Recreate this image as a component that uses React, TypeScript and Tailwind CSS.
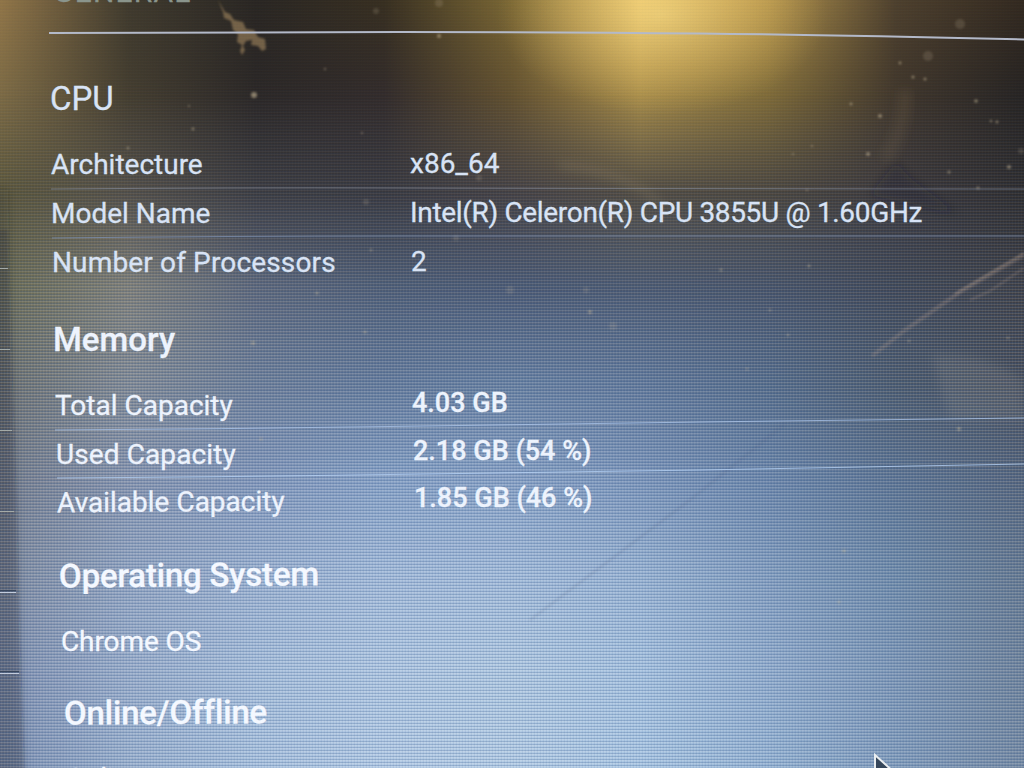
import type { ReactNode } from 'react';

// Glow behind the panel: one list per 96px band, one stop every 128px
const glow = [
  ['#927648', '#403a2d', '#2a2622', '#382f20', '#7c6834', '#eac872', '#b4944c', '#4e402d', '#33291f'],
  ['#7c6a44', '#443d2f', '#2b2726', '#322b2a', '#62502f', '#a58a48', '#7e6a38', '#40362b', '#262322'],
  ['#5a5438', '#524d45', '#3b3a3e', '#38373c', '#443f40', '#514a3f', '#4a443b', '#3a3638', '#2d2b2c'],
  ['#68684f', '#7f7e76', '#5c6577', '#4f5c72', '#4b5870', '#4c586d', '#475164', '#3f4552', '#3d3d42'],
  ['#6c6e6a', '#828992', '#6d7d96', '#657a99', '#687f9f', '#627898', '#566b87', '#4b5869', '#454a55'],
  ['#757b87', '#8794ad', '#8498ba', '#88a2c6', '#89a2c5', '#7d96ba', '#6c86a9', '#5d7390', '#556378'],
  ['#808a9d', '#93a5c1', '#9db2d0', '#a5bcda', '#a4bcda', '#9ab4d3', '#849ebf', '#708ba9', '#66788e'],
  ['#8190ae', '#9aadca', '#a8bfdb', '#b1c8e2', '#b2cae2', '#a8c3e0', '#93adcd', '#7e97b6', '#70839a'],
  ['#7f90b0', '#9bb1ce', '#aac2de', '#b4cbe5', '#b5cde5', '#abc7e3', '#97b4d3', '#829cbb', '#7589a2'],
];

const specks = [
  [254, 95, 3], [193, 129, 1.4], [128, 148, 1.3], [189, 106, 0.9], [325, 69, 1], [362, 133, 1],
  [439, 3, 4], [376, 11, 3], [439, 36, 2], [479, 178, 3], [366, 202, 3], [456, 238, 3], [371, 250, 1.2],
  [851, 104, 1.4], [960, 24, 5], [928, 56, 5], [900, 63, 1.4], [913, 77, 1.5], [925, 79, 1.5],
  [880, 116, 2], [991, 121, 1.2], [997, 122, 1.4], [976, 101, 1.8], [1021, 151, 3], [1009, 167, 2],
  [949, 172, 1.5], [868, 154, 2], [793, 154, 1], [812, 146, 1], [807, 190, 1], [978, 188, 1.4],
  [317, 293, 1.5], [253, 343, 2], [510, 290, 4], [586, 290, 3], [590, 312, 2], [613, 326, 4],
  [365, 332, 1.6], [721, 270, 1.4], [809, 266, 1.4], [770, 310, 1.2],
  [788, 335, 1.2], [909, 341, 1.2], [1008, 338, 1.2], [747, 369, 1.2], [959, 429, 2],
  [261, 439, 1.5], [844, 551, 1.8], [839, 602, 1.4],
];

const ticks = [268, 350, 431, 512, 592, 673];
const tickWidths = ['w-2', 'w-[10px]', 'w-[12px]', 'w-[14px]', 'w-4', 'w-[19px]'];

function Backdrop() {
  return (
    <svg className="absolute inset-0 h-full w-full" viewBox="0 0 1024 768">
      <defs>
        {glow.map((row, i) => (
          <linearGradient key={i} id={`row${i}`} gradientUnits="userSpaceOnUse" x1="0" x2="1024" y1="0" y2="0">
            {row.map((c, j) => (
              <stop key={j} offset={j / 8} stopColor={c} />
            ))}
          </linearGradient>
        ))}
        <linearGradient id="fadeDown" x1="0" x2="0" y1="0" y2="1">
          <stop offset="0" stopColor="#fff" stopOpacity="0" />
          <stop offset="1" stopColor="#fff" />
        </linearGradient>
        <linearGradient id="gridFade" x1="0" x2="0" y1="0" y2="1">
          <stop offset="0.1" stopColor="#fff" stopOpacity="0.1" />
          <stop offset="0.45" stopColor="#fff" />
        </linearGradient>
        {glow.slice(1).map((_, i) => (
          <mask key={i} id={`band${i}`} className="[mask-type:alpha]" maskUnits="userSpaceOnUse" x="0" y={i * 96} width="1024" height="96">
            <rect y={i * 96} width="1024" height="96" fill="url(#fadeDown)" />
          </mask>
        ))}
        <mask id="gridMask">
          <rect width="1024" height="768" fill="url(#gridFade)" />
        </mask>
        <pattern id="pixels" width="3" height="3" patternUnits="userSpaceOnUse">
          <rect width="3" height="1" fill="#2c5488" fillOpacity="0.24" />
          <rect y="1" width="3" height="1" fill="#fff" fillOpacity="0.13" />
          <rect width="1" height="3" fill="#2a4a7a" fillOpacity="0.07" />
          <rect x="1" width="1" height="3" fill="#fff" fillOpacity="0.05" />
        </pattern>
        <radialGradient id="lamp">
          <stop offset="0" stopColor="#ffe084" stopOpacity="0.5" />
          <stop offset="0.5" stopColor="#f0c868" stopOpacity="0.3" />
          <stop offset="1" stopColor="#e8bf5c" stopOpacity="0" />
        </radialGradient>
        <filter id="soft" x="-50%" y="-50%" width="200%" height="200%">
          <feGaussianBlur stdDeviation="5" />
        </filter>
        <filter id="fine" x="-20%" y="-20%" width="140%" height="140%">
          <feGaussianBlur stdDeviation="0.8" />
        </filter>
      </defs>

      {glow.slice(1).map((_, i) => (
        <g key={i}>
          <rect y={i * 96} width="1024" height="96" fill={`url(#row${i})`} />
          <rect y={i * 96} width="1024" height="96" fill={`url(#row${i + 1})`} mask={`url(#band${i})`} />
        </g>
      ))}
      <ellipse cx="662" cy="15" rx="165" ry="100" fill="url(#lamp)" />

      {/* side menu edge */}
      <path d="M-10 230H8L13 400L17 520L20 640L25 790H-10Z" fill="#20262c" fillOpacity="0.24" filter="url(#fine)" />
      <path d="M-10 190H8L13 400L17 520L20 640L25 790H-10Z" fill="#20262c" fillOpacity="0.2" filter="url(#soft)" />

      {/* smudges and scratches */}
      <path
        d="M218 0l7 12 5 2 4 6 9 2 3 7 8 1 4 7 7 2 1 10-4 2-4-5-7-1 1-5-6 1-3 5 2 4-3 5-2-4 2-6-5-3 1-8-5-4-2-9-7-3-1-6Z"
        fill="#a4875d"
        fillOpacity="0.6"
        filter="url(#fine)"
      />
      <path d="M1024 255L960 292L905 330L872 356" stroke="#a59080" strokeOpacity="0.3" strokeWidth="4" fill="none" filter="url(#fine)" />
      <path d="M1024 253L985 276L955 294" stroke="#b59c84" strokeOpacity="0.4" strokeWidth="1.5" fill="none" filter="url(#fine)" />
      <path d="M1024 268L990 291L970 300" stroke="#a59080" strokeOpacity="0.3" strokeWidth="2" fill="none" filter="url(#fine)" />
      <path d="M785 424L690 500L530 620" stroke="#4a5c7c" strokeOpacity="0.2" strokeWidth="2" fill="none" filter="url(#fine)" />
      <path d="M560 165Q620 170 660 202" stroke="#a08a68" strokeOpacity="0.25" strokeWidth="6" fill="none" filter="url(#soft)" />
      <path d="M932 356Q980 350 1024 380V420H950Z" fill="#a09a98" fillOpacity="0.16" filter="url(#soft)" />
      <path d="M896 162L910 178L960 215L870 195Z" fill="#1c2028" fillOpacity="0.3" filter="url(#soft)" />
      <path d="M905 90Q905 130 885 160" stroke="#7d6a48" strokeOpacity="0.18" strokeWidth="14" fill="none" filter="url(#soft)" />
      <g fill="#c4b493" fillOpacity="0.4" filter="url(#fine)">
        {specks.map(([x, y, r]) => (
          <circle key={`${x}-${y}`} cx={x} cy={y} r={r} fillOpacity={r === 3 && y === 95 ? 0.6 : r > 2 ? 0.18 : 0.55} />
        ))}
      </g>
      <rect width="1024" height="768" fill="url(#pixels)" mask="url(#gridMask)" />
    </svg>
  );
}

// Hairline under a row, bent like the panel
function Divider({ d, className }: { d: string; className: string }) {
  return (
    <svg className={`block h-3 w-full overflow-visible ${className}`} viewBox="0 0 1024 12" fill="none" stroke="currentColor">
      <path d={d} />
    </svg>
  );
}

function Heading({ className, children }: { className: string; children: ReactNode }) {
  return <h2 className={`h-11 whitespace-nowrap text-[33px] leading-[44px] ${className}`}>{children}</h2>;
}

type RowProps = {
  label: string;
  value?: string;
  className: string;
  labelClass: string;
  valueClass?: string;
};

function Row({ label, value, className, labelClass, valueClass = '' }: RowProps) {
  return (
    <div className={`flex whitespace-nowrap text-[28px] ${className}`}>
      <div className={`shrink-0 ${labelClass}`}>{label}</div>
      {value && <div className={valueClass}>{value}</div>}
    </div>
  );
}

export default function App() {
  return (
    <div className="relative flex h-[768px] w-[1024px] overflow-hidden bg-[#2b2726] font-['Roboto',sans-serif] [-webkit-text-stroke:0.3px_currentColor]">
      <Backdrop />

      {/* Side menu separators */}
      <aside className="relative h-full w-0 shrink-0 pt-[268px]">
        {ticks.map((y, i) => (
          <div
            key={y}
            className={`mb-[80px] h-px ${tickWidths[i]} ${i > 3 ? 'bg-[#c3cddd] shadow-[0_-2px_0_#38465c]' : 'bg-[#a4aaa7]'}`}
          />
        ))}
      </aside>

      <main className="relative w-[1024px] shrink-0">
        <div className="flex h-[27px] items-end pl-[53px] text-[30px] leading-[40px] tracking-[1.2px] text-[#8a958c]">
          <span className="-translate-y-[15px]">GENERAL</span>
        </div>
        <Divider d="M49 6Q230 5 400 5T700 6.5T1024 12.5" className="stroke-2 text-[#b3b9c9]" />

        <section className="pt-[38px] text-[#d8e3f5]">
          <Heading className="mb-5 pl-[50px]">CPU</Heading>
          <Row
            label="Architecture"
            value="x86_64"
            className="h-12 pl-[51px] leading-[48px]"
            labelClass="w-[359px]"
            valueClass="-translate-y-px"
          />
          <Divider d="M51 6Q230 4.5 400 5T1024 6" className="-my-1.5 text-[#8b93a4]/60" />
          <Row
            label="Model Name"
            value="Intel(R) Celeron(R) CPU 3855U @ 1.60GHz"
            className="h-[49px] pl-[51px] leading-[50px]"
            labelClass="w-[359px]"
            valueClass="-translate-y-px tracking-[-0.33px]"
          />
          <Divider d="M52 6Q230 4 400 4T1024 4" className="-my-1.5 text-[#8296b8]/70" />
          <Row
            label="Number of Processors"
            value="2"
            className="h-[49px] pl-[52px] leading-[50px]"
            labelClass="w-[359px] tracking-[0.15px]"
            valueClass="-translate-y-px"
          />
        </section>

        <section className="pt-[31px] text-[#edf3fd]">
          <Heading className="mb-5 pl-[53px] font-medium">Memory</Heading>
          <Row
            label="Total Capacity"
            value="4.03 GB"
            className="h-12 pl-[55px] leading-[48px]"
            labelClass="w-[357px]"
            valueClass="-translate-y-[3px] text-[27px] font-medium"
          />
          <Divider d="M55 6Q220 5 390 2.5L700 -2L1024 -6" className="-my-1.5 text-[#a9c2e6]/80" />
          <Row
            label="Used Capacity"
            value="2.18 GB (54 %)"
            className="h-12 pl-[56px] leading-[49px]"
            labelClass="w-[357px] tracking-[0.1px]"
            valueClass="-translate-y-[3px] text-[27px] font-medium"
          />
          <Divider d="M57 6Q220 5 390 2.5L700 -2L1024 -8" className="-my-1.5 text-[#b4cff2]/80" />
          <Row
            label="Available Capacity"
            value="1.85 GB (46 %)"
            className="h-[49px] pl-[57px] leading-[48px]"
            labelClass="w-[357px] -rotate-[0.4deg]"
            valueClass="-translate-y-1 text-[27px] font-medium"
          />
        </section>

        <section className="pt-7 text-[#f4f8ff]">
          <Heading className="mb-[19px] origin-left -rotate-[0.5deg] pl-[59px] font-medium tracking-[-0.2px]">Operating System</Heading>
          <Row label="Chrome OS" className="h-12 pl-[61px] leading-[48px]" labelClass="tracking-[-0.1px]" />
        </section>

        <section className="pt-[26px] text-[#f4f8ff]">
          <Heading className="mb-4 origin-left -rotate-[0.4deg] pl-[64px] font-medium tracking-[-0.2px]">Online/Offline</Heading>
          <Row label="Online" className="h-12 pl-[66px] leading-[54px]" labelClass="tracking-[-0.3px]" />
        </section>
      </main>

      {/* Mouse pointer */}
      <svg className="absolute left-[870px] top-[750px] h-[30px] w-[30px]" viewBox="0 0 30 30">
        <path d="M5 5V30L11 24H26Z" fill="#35465a" stroke="#e9edf0" strokeWidth="2" />
      </svg>
    </div>
  );
}
